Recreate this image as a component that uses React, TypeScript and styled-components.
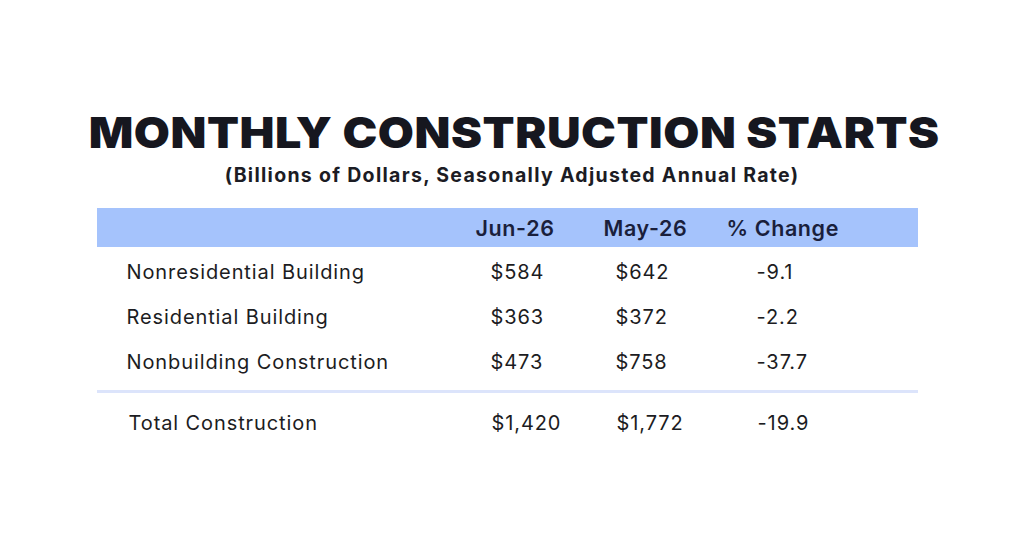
import styled, { createGlobalStyle } from "styled-components";

const GlobalStyle = createGlobalStyle`
  html, body {
    margin: 0;
    padding: 0;
    background: #ffffff;
  }
  body {
    font-family: Inter, "Liberation Sans", sans-serif;
    color: #1c1c24;
  }
`;

type Row = {
  label: string;
  jun: string;
  may: string;
  change: string;
};

const rows: Row[] = [
  { label: "Nonresidential Building", jun: "$584", may: "$642", change: "-9.1" },
  { label: "Residential Building", jun: "$363", may: "$372", change: "-2.2" },
  { label: "Nonbuilding Construction", jun: "$473", may: "$758", change: "-37.7" },
];

const total: Row = {
  label: "Total Construction",
  jun: "$1,420",
  may: "$1,772",
  change: "-19.9",
};

const Page = styled.div`
  width: 1024px;
  height: 533px;
  display: flex;
  flex-direction: column;
  align-items: center;
  padding-top: 111px;
  box-sizing: border-box;
`;

const Title = styled.h1`
  margin: 0;
  font-family: Inter, "Liberation Sans", sans-serif;
  font-weight: 900;
  font-size: 43px;
  line-height: 43px;
  color: #16171f;
  letter-spacing: 0.5px;
  white-space: nowrap;
  transform: translateX(2px) scaleX(1.085);
`;

const Subtitle = styled.p`
  margin: 12px 0 0;
  font-weight: 700;
  font-size: 19.5px;
  line-height: 19px;
  letter-spacing: 1.3px;
  color: #1c1c24;
  white-space: nowrap;
`;

const Table = styled.div`
  margin-top: 23px;
  width: 821px;
  transform: translateX(-5px);
`;

const grid = `
  display: grid;
  grid-template-columns: 379px 128px 123px 1fr;
  align-items: center;
`;

const HeaderBar = styled.div`
  ${grid}
  height: 39px;
  background: #a5c3fc;
  font-weight: 600;
  font-size: 21.5px;
  letter-spacing: 0.6px;
  color: #1a1f3c;
`;

const DataRow = styled.div<{ $total?: boolean }>`
  ${grid}
  height: 45px;
  font-size: 20px;
  letter-spacing: 0.9px;
  color: #1c1c22;
  margin-top: ${(p) => (p.$total ? "7px" : "0")};
`;

const Rows = styled.div`
  padding-top: 2.5px;
`;

const Cell = styled.span<{ $indent?: number }>`
  padding-left: ${(p) => p.$indent ?? 0}px;
  white-space: nowrap;
`;

const Divider = styled.hr`
  margin: 5.5px 0 0;
  border: none;
  height: 3px;
  background: #dce4fb;
`;

function DataLine({ row, total: isTotal }: { row: Row; total?: boolean }) {
  const shift = isTotal ? 1 : 0;
  return (
    <DataRow $total={isTotal}>
      <Cell $indent={30 + shift * 2}>{row.label}</Cell>
      <Cell $indent={15 + shift}>{row.jun}</Cell>
      <Cell $indent={12 + shift}>{row.may}</Cell>
      <Cell $indent={30 + shift}>{row.change}</Cell>
    </DataRow>
  );
}

export default function App() {
  return (
    <>
      <GlobalStyle />
      <Page>
        <Title>MONTHLY CONSTRUCTION STARTS</Title>
        <Subtitle>(Billions of Dollars, Seasonally Adjusted Annual Rate)</Subtitle>
        <Table>
          <HeaderBar>
            <Cell />
            <Cell>Jun-26</Cell>
            <Cell>May-26</Cell>
            <Cell>% Change</Cell>
          </HeaderBar>
          <Rows>
            {rows.map((r) => (
              <DataLine key={r.label} row={r} />
            ))}
          </Rows>
          <Divider />
          <DataLine row={total} total />
        </Table>
      </Page>
    </>
  );
}
